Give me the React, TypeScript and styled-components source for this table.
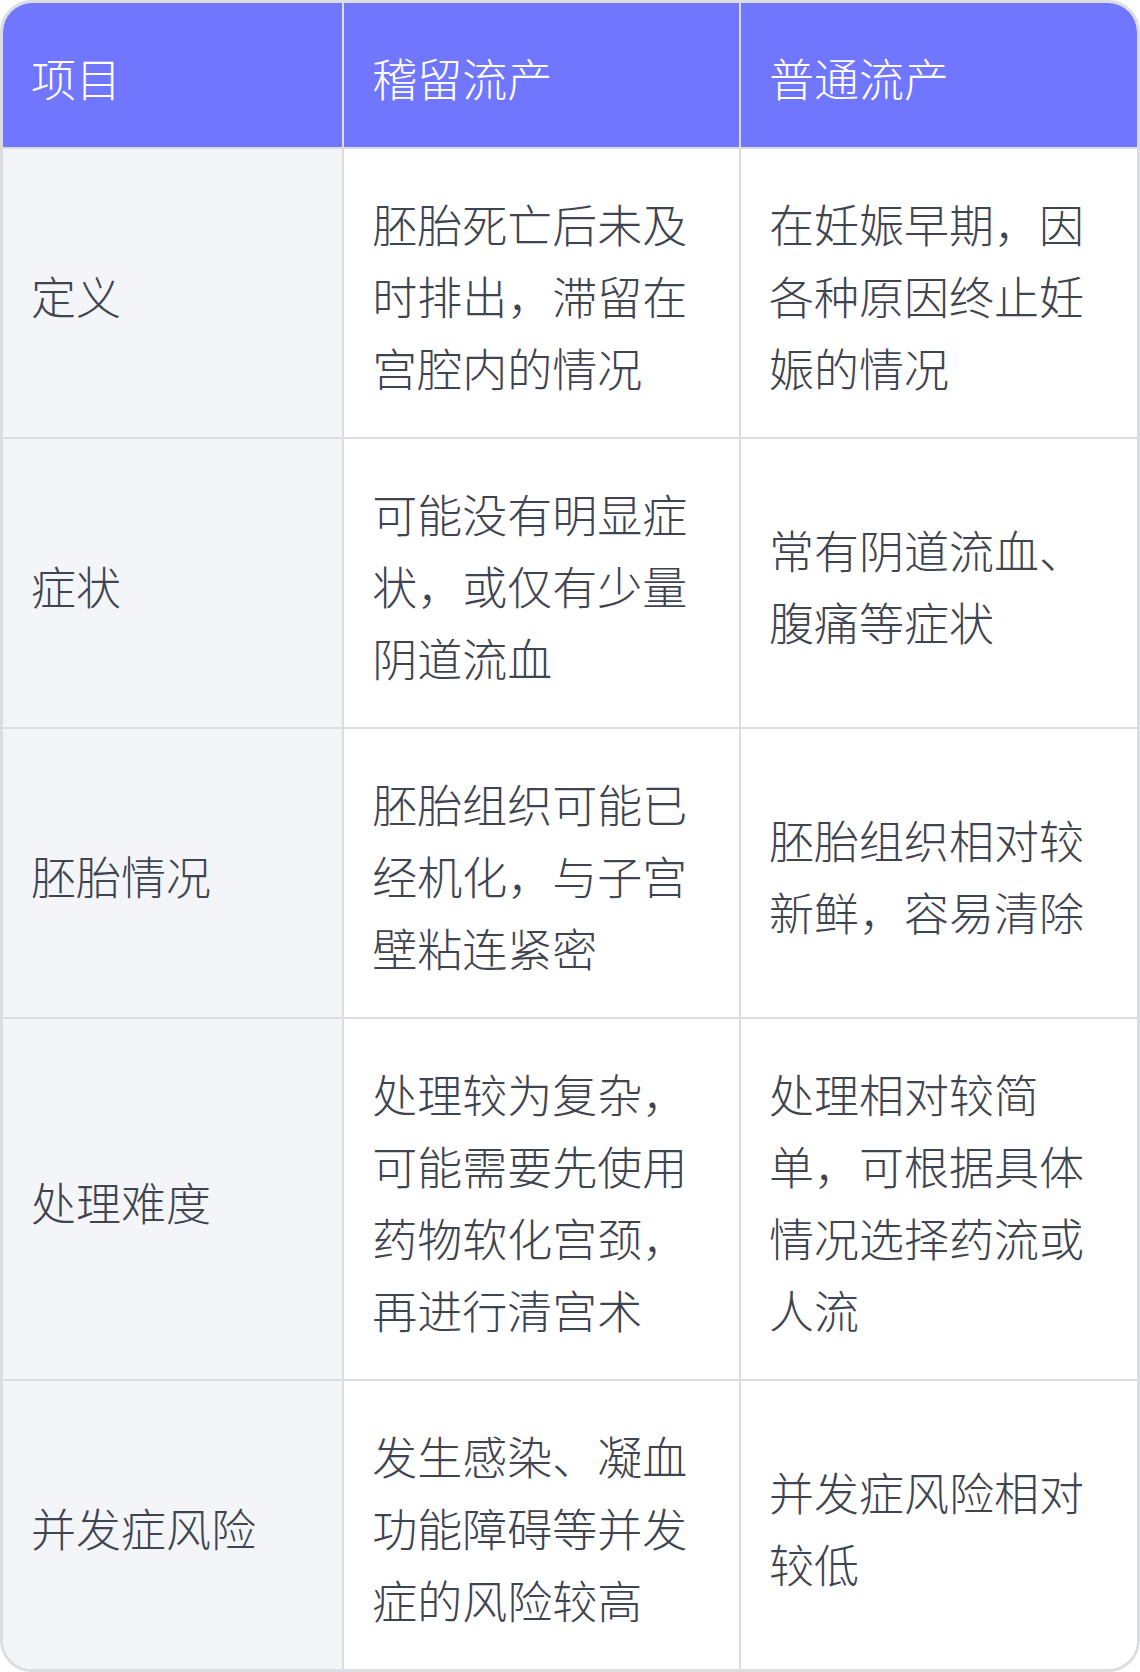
import React from 'react';
import styled, {createGlobalStyle} from "styled-components";

const GlobalStyle = createGlobalStyle`
  html, body {
    margin: 0;
    padding: 0;
    background: #ffffff;
  }
  body {
    font-family: "Noto Sans CJK SC", "Noto Sans", sans-serif;
  }
`

interface CellProps {
	$label?: boolean;
	$last?: boolean;
}

interface RowProps {
	$last?: boolean;
}

const rows = [
	{
		item: '定义',
		missed: '胚胎死亡后未及时排出，滞留在宫腔内的情况',
		normal: '在妊娠早期，因各种原因终止妊娠的情况',
	},
	{
		item: '症状',
		missed: '可能没有明显症状，或仅有少量阴道流血',
		normal: '常有阴道流血、腹痛等症状',
	},
	{
		item: '胚胎情况',
		missed: '胚胎组织可能已经机化，与子宫壁粘连紧密',
		normal: '胚胎组织相对较新鲜，容易清除',
	},
	{
		item: '处理难度',
		missed: '处理较为复杂，可能需要先使用药物软化宫颈，再进行清宫术',
		normal: '处理相对较简单，可根据具体情况选择药流或人流',
	},
	{
		item: '并发症风险',
		missed: '发生感染、凝血功能障碍等并发症的风险较高',
		normal: '并发症风险相对较低',
	},
];

const Card = styled.div`
  width: 1140px;
  box-sizing: border-box;
  border: 3px solid #dcdde3;
  border-radius: 32px;
  overflow: hidden;
  background: #ffffff;
`

const Table = styled.table`
  width: 100%;
  border-collapse: collapse;
  table-layout: fixed;
`

const HeadRow = styled.tr`
  background: #7176ff;
`

const HeadCell = styled.th<CellProps>`
  box-sizing: border-box;
  padding: 39px 28px 33px;
  text-align: left;
  font-weight: 300;
  font-size: 45px;
  line-height: 72px;
  color: #ffffff;
  border-bottom: 2px solid #dcdde3;
  border-right: ${props => props.$last ? 'none' : '2px solid #dcdde3'};
`

const Row = styled.tr<RowProps>`
  & > td {
    border-bottom: ${props => props.$last ? 'none' : '2px solid #dcdde3'};
  }
`

const Cell = styled.td<CellProps>`
  box-sizing: border-box;
  padding: 39px 28px 33px;
  vertical-align: middle;
  font-weight: 300;
  font-size: 45px;
  line-height: 72px;
  color: #3f4451;
  background: ${props => props.$label ? '#f4f5f9' : '#ffffff'};
  border-right: ${props => props.$last ? 'none' : '2px solid #dcdde3'};
`

export default function App() {
	return (
		<>
			<GlobalStyle/>
			<Card>
				<Table>
					<colgroup>
						<col style={{width: '30%'}}/>
						<col style={{width: '35%'}}/>
						<col style={{width: '35%'}}/>
					</colgroup>
					<thead>
						<HeadRow>
							<HeadCell>项目</HeadCell>
							<HeadCell>稽留流产</HeadCell>
							<HeadCell $last>普通流产</HeadCell>
						</HeadRow>
					</thead>
					<tbody>
						{rows.map((r, i) => (
							<Row key={r.item} $last={i === rows.length - 1}>
								<Cell $label>{r.item}</Cell>
								<Cell>{r.missed}</Cell>
								<Cell $last>{r.normal}</Cell>
							</Row>
						))}
					</tbody>
				</Table>
			</Card>
		</>
	);
}
